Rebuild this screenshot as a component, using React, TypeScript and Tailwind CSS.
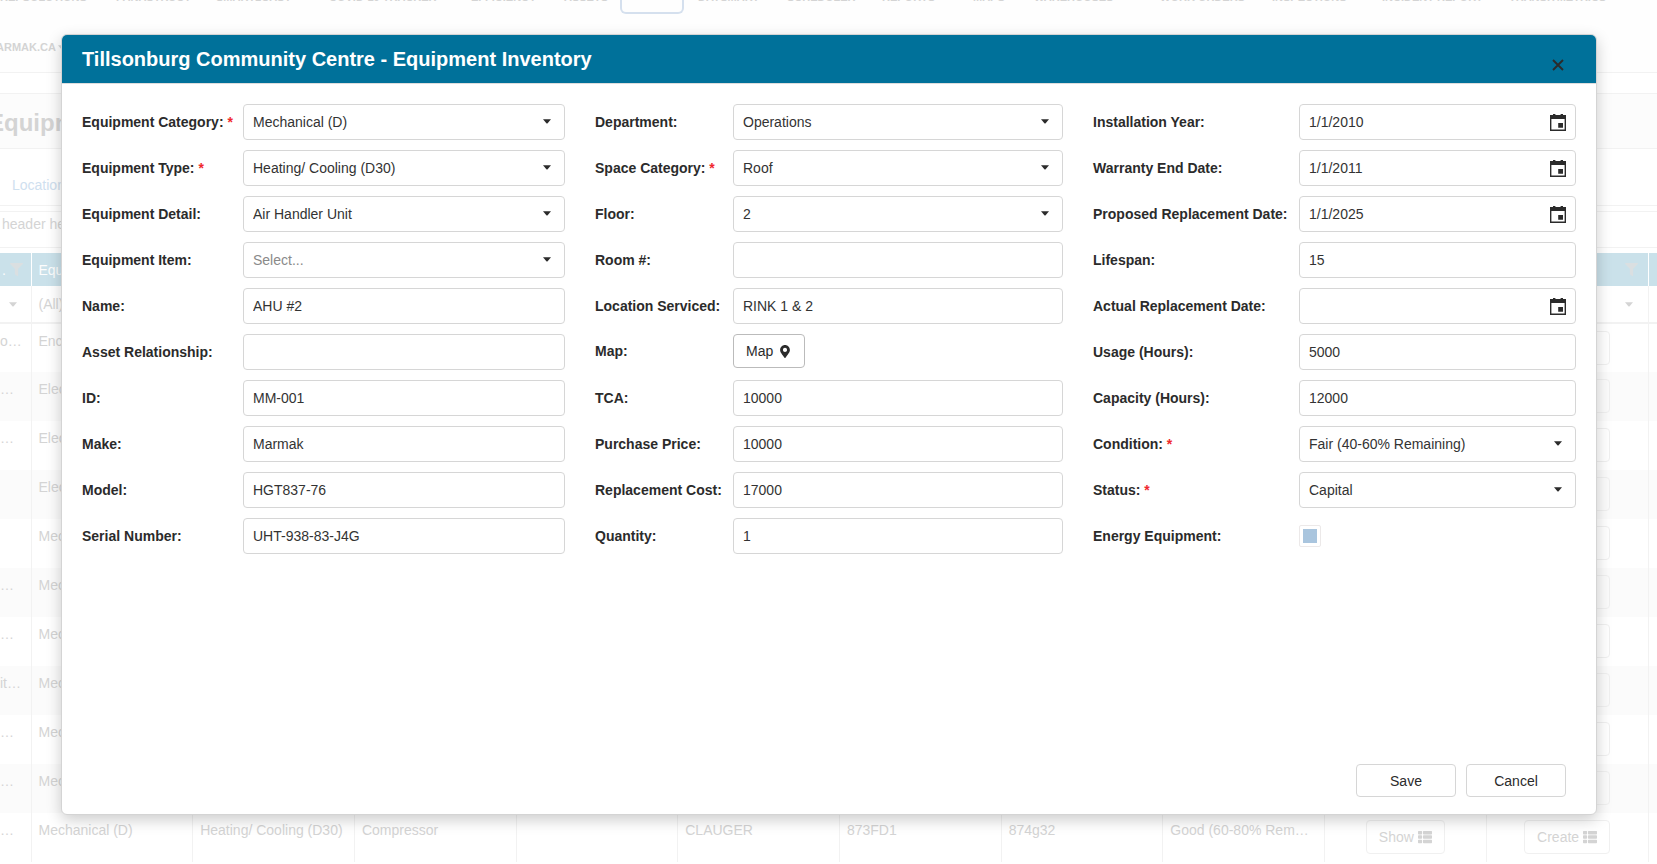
import { useId, type ReactNode } from "react";
import { FaFilter, FaThList, FaMapMarkerAlt } from "react-icons/fa";

function Caret({ className = "" }: { className?: string }) {
  return (
    <svg viewBox="0 0 8 5" className={`h-[5px] w-2 ${className}`} aria-hidden="true">
      <path d="M0 0.3h8L4.6 4.3q-.6.6-1.2 0z" fill="currentColor" />
    </svg>
  );
}

function CalendarIcon() {
  return (
    <svg viewBox="0 0 16 17" className="h-[17px] w-4" aria-hidden="true">
      <path
        fill="currentColor"
        fillRule="evenodd"
        d="M3 0h2.4v1h5.2V0H13v1h3v16H0V1h3zM1.4 5v10.4h13.2V5zM8.2 9h4.8v4.8H8.2z"
      />
    </svg>
  );
}

const box = "h-9 w-full rounded border border-[#d6d6d6] bg-white px-[9px] text-sm";

function Row({
  label,
  labelWidth,
  required,
  id,
  height = "h-9",
  children,
}: {
  label: string;
  labelWidth: string;
  required?: boolean;
  id: string;
  height?: string;
  children: ReactNode;
}) {
  return (
    <div className={`flex items-center ${height}`}>
      <label htmlFor={id} className={`shrink-0 text-sm font-bold whitespace-nowrap ${labelWidth}`}>
        {label}
        {required && <span className="text-[#f0282d]"> *</span>}
      </label>
      <div className="relative min-w-0 flex-1">{children}</div>
    </div>
  );
}

type FieldProps = {
  label: string;
  labelWidth: string;
  value?: string;
  required?: boolean;
  kind?: "text" | "select" | "date";
};

function Field({ label, labelWidth, value = "", required, kind = "text" }: FieldProps) {
  const id = useId();
  return (
    <Row label={label} labelWidth={labelWidth} required={required} id={id}>
      {kind === "select" ? (
        <>
          <select
            id={id}
            defaultValue={value}
            className={`${box} appearance-none ${value ? "text-[#333]" : "text-[#8a8a8a]"}`}
          >
            <option value={value}>{value || "Select..."}</option>
          </select>
          <Caret className="pointer-events-none absolute top-[15px] right-[14px]" />
        </>
      ) : (
        <input id={id} type="text" defaultValue={value} className={`${box} text-[#333]`} />
      )}
      {kind === "date" && (
        <button
          type="button"
          aria-label={`Choose ${label}`}
          className="absolute inset-y-0 right-0 flex w-9 items-center justify-center"
        >
          <CalendarIcon />
        </button>
      )}
    </Row>
  );
}

type Spec = Omit<FieldProps, "labelWidth">;

const first: Spec[] = [
  { label: "Equipment Category:", value: "Mechanical (D)", required: true, kind: "select" },
  { label: "Equipment Type:", value: "Heating/ Cooling (D30)", required: true, kind: "select" },
  { label: "Equipment Detail:", value: "Air Handler Unit", kind: "select" },
  { label: "Equipment Item:", kind: "select" },
  { label: "Name:", value: "AHU #2" },
  { label: "Asset Relationship:" },
  { label: "ID:", value: "MM-001" },
  { label: "Make:", value: "Marmak" },
  { label: "Model:", value: "HGT837-76" },
  { label: "Serial Number:", value: "UHT-938-83-J4G" },
];

const secondTop: Spec[] = [
  { label: "Department:", value: "Operations", kind: "select" },
  { label: "Space Category:", value: "Roof", required: true, kind: "select" },
  { label: "Floor:", value: "2", kind: "select" },
  { label: "Room #:" },
  { label: "Location Serviced:", value: "RINK 1 & 2" },
];

const secondBottom: Spec[] = [
  { label: "TCA:", value: "10000" },
  { label: "Purchase Price:", value: "10000" },
  { label: "Replacement Cost:", value: "17000" },
  { label: "Quantity:", value: "1" },
];

const third: Spec[] = [
  { label: "Installation Year:", value: "1/1/2010", kind: "date" },
  { label: "Warranty End Date:", value: "1/1/2011", kind: "date" },
  { label: "Proposed Replacement Date:", value: "1/1/2025", kind: "date" },
  { label: "Lifespan:", value: "15" },
  { label: "Actual Replacement Date:", kind: "date" },
  { label: "Usage (Hours):", value: "5000" },
  { label: "Capacity (Hours):", value: "12000" },
  { label: "Condition:", value: "Fair (40-60% Remaining)", required: true, kind: "select" },
  { label: "Status:", value: "Capital", required: true, kind: "select" },
];

function Dialog() {
  return (
    <div
      role="dialog"
      aria-labelledby="dialog-title"
      className="absolute top-[34px] right-[60px] bottom-[49px] left-[61px] flex flex-col overflow-hidden rounded-md border border-[#d4d4d4] bg-white shadow-[0_5px_15px_rgba(0,0,0,0.2)]"
    >
      <header className="flex h-[49px] shrink-0 justify-between border-b border-[#ddd] bg-[#00719a] px-5">
        <h1 id="dialog-title" className="text-xl leading-[48px] font-bold text-white">
          Tillsonburg Community Centre - Equipment Inventory
        </h1>
        <button type="button" aria-label="Close" className="flex h-9 w-9 items-center justify-center self-end">
          <svg viewBox="0 0 12 12" className="h-3 w-3" aria-hidden="true">
            <path d="M1 1l10 10M11 1L1 11" stroke="currentColor" strokeWidth="1.9" />
          </svg>
        </button>
      </header>

      <form className="flex flex-1 flex-col">
        <div className="grid grid-cols-3 px-5 pt-5">
          <div className="flex flex-col gap-2.5 pr-[15px]">
            {first.map((f) => (
              <Field key={f.label} labelWidth="w-[161px]" {...f} />
            ))}
          </div>
          <div className="flex flex-col gap-2.5 px-[15px]">
            {secondTop.map((f) => (
              <Field key={f.label} labelWidth="w-[138px]" {...f} />
            ))}
            <Row label="Map:" labelWidth="w-[138px]" id="map-button" height="mb-0.5 h-[34px]">
              <button
                id="map-button"
                type="button"
                className="flex h-[34px] items-center gap-[7px] rounded border border-[#bbb] pr-3.5 pl-3 text-sm"
              >
                Map
                <FaMapMarkerAlt className="h-[13px] w-2.5" />
              </button>
            </Row>
            {secondBottom.map((f) => (
              <Field key={f.label} labelWidth="w-[138px]" {...f} />
            ))}
          </div>
          <div className="flex flex-col gap-2.5 pl-[15px]">
            {third.map((f) => (
              <Field key={f.label} labelWidth="w-[206px]" {...f} />
            ))}
            <Row label="Energy Equipment:" labelWidth="w-[206px]" id="energy">
              <input
                id="energy"
                type="checkbox"
                className="block h-[22px] w-[22px] appearance-none rounded-xs border border-[#ece9e9] bg-[#a9c5de] bg-clip-content p-[3px]"
              />
            </Row>
          </div>
        </div>
        <div className="mt-auto flex justify-end gap-2.5 px-[30px] pb-[17px]">
          <button type="button" className="h-[33px] w-[100px] rounded border border-[#d6d6d6] text-sm">
            Save
          </button>
          <button type="button" className="h-[33px] w-[100px] rounded border border-[#d6d6d6] text-sm">
            Cancel
          </button>
        </div>
      </form>
    </div>
  );
}

const nav = [
  { text: "REPSOLUTIONS", gap: "w-[116px]" },
  { text: "PANASTRUCT", gap: "w-[100px]" },
  { text: "SMART1CAST", gap: "w-[113px]" },
  { text: "COVID-19 TRACKER", gap: "w-[142px]" },
  { text: "EFFICIENCY", gap: "w-[93px]" },
  { text: "ASSETS", gap: "w-[56px]" },
  { text: "", gap: "w-[78px]" },
  { text: "DAYSMART", gap: "w-[89px]" },
  { text: "SCHEDULER", gap: "w-[95px]" },
  { text: "REPORTS", gap: "w-[91px]" },
  { text: "MAPS", gap: "w-[61px]" },
  { text: "WAREHOUSES", gap: "w-[126px]" },
  { text: "WORK ORDERS", gap: "w-[112px]" },
  { text: "INSPECTIONS", gap: "w-[110px]" },
  { text: "INCIDENT REPORT", gap: "w-[127px]" },
  { text: "TRANSITMETRICS", gap: "w-[110px]" },
];

const types: [string, string][] = [
  ["o…", "Enclosure"],
  ["…", "Electrical"],
  ["…", "Electrical"],
  ["", "Electrical"],
  ["", "Mechanical (D)"],
  ["…", "Mechanical (D)"],
  ["…", "Mechanical (D)"],
  ["it…", "Mechanical (D)"],
  ["…", "Mechanical (D)"],
  ["…", "Mechanical (D)"],
  ["…", "Mechanical (D)"],
];

const rest = ["Heating/ Cooling (D30)", "Compressor", "", "CLAUGER", "873FD1", "874g32", "Good (60-80% Remaining)"];

function RowButton({ children }: { children: string }) {
  return (
    <button type="button" className="inline-flex h-[34px] items-center gap-1 rounded border border-[#f0f0f0] px-3">
      {children}
      <FaThList className="h-3.5 w-3.5" />
    </button>
  );
}

function Background() {
  return (
    <div className="h-full text-sm text-[#d4d4d4]">
      <nav className="flex h-[73px] flex-col border-b border-[#f2f2f2] bg-[#fefefe]">
        <div className="flex h-4 shrink-0 overflow-hidden">
          {nav.map(({ text, gap }) =>
            text ? (
              <a key={text} href="#" className={`-mt-[10px] shrink-0 text-[11px] leading-[14px] font-bold whitespace-nowrap ${gap}`}>
                {text}
              </a>
            ) : (
              <a key="current" href="#" aria-label="Equipment" className={`h-3.5 shrink-0 ${gap}`}>
                <span className="block h-3.5 w-16 rounded-b-md border-2 border-t-0 border-[#d5e0ee]" />
              </a>
            ),
          )}
        </div>
        <div className="mt-[23px] -ml-1 flex items-center gap-0.5 text-[11px] leading-4 font-bold">
          ARMAK.CA
          <Caret />
        </div>
      </nav>
      <div className="mt-5 flex h-[56px] items-center border-y border-[#f2f2f2] bg-[#fcfcfc] pt-1 text-2xl font-bold">
        <span className="-ml-3">Equipment</span>
      </div>
      <div className="h-[57px] border-b border-[#f2f2f2] px-3 pt-[26px]">
        <a href="#" className="text-[#cfe0ef]">
          Location
        </a>
      </div>
      <div className="mt-[5px] h-[37px] border-y border-[#f2f2f2] pl-0.5 leading-6">header here to group by that column</div>
      <table className="mt-[5px] w-full table-fixed border-collapse">
        <colgroup>
          <col className="w-[31px]" />
          {Array.from({ length: 10 }, (_, i) => (
            <col key={i} />
          ))}
          <col className="w-[9px]" />
        </colgroup>
        <thead>
          <tr className="h-[33px] bg-[#cae1ea] text-left text-[#fdfdfd]">
            <th className="border-r border-white font-normal">
              <span className="flex items-center gap-1 pl-0.5">
                .
                <FaFilter className="h-[13px] w-[13px] shrink-0 text-[#dadfe1]" />
              </span>
            </th>
            {Array.from({ length: 10 }, (_, i) => (
              <th key={i} className="border-r border-white pr-2.5 pl-[7px] font-normal">
                <span className="flex items-center">
                  {i === 0 ? "Equipment" : ""}
                  <FaFilter className="ml-auto h-[13px] w-[13px] text-[#dadfe1]" />
                </span>
              </th>
            ))}
            <th />
          </tr>
        </thead>
        <tbody>
          <tr className="h-[37px] border-b-2 border-[#f2f2f2]">
            <td className="border-r border-[#f2f2f2]">
              <Caret className="ml-[9px]" />
            </td>
            {Array.from({ length: 10 }, (_, i) => (
              <td key={i} className="border-r border-[#f2f2f2] px-[7px]">
                <span className="flex items-center justify-between pr-2">
                  {i === 0 ? "(All)" : <span />}
                  <Caret />
                </span>
              </td>
            ))}
            <td />
          </tr>
          {types.map(([head, type], r) => (
            <tr key={r} className="h-[49px] align-top odd:bg-[#fbfbfb] even:bg-white">
              <td className="overflow-hidden border-r border-[#f2f2f2] pt-[7px]">{head}</td>
              {[type, ...rest].map((text, i) => (
                <td key={i} className="truncate border-r border-[#f2f2f2] pt-[7px] pr-2 pl-[7px]">
                  {text}
                </td>
              ))}
              <td className="border-r border-[#f2f2f2] pt-[7px] text-center">
                <RowButton>Show</RowButton>
              </td>
              <td className="border-r border-[#f2f2f2] pt-[7px] text-center">
                <RowButton>Create</RowButton>
              </td>
              <td />
            </tr>
          ))}
        </tbody>
      </table>
    </div>
  );
}

export default function App() {
  return (
    <main className="relative h-screen overflow-hidden bg-white font-['Liberation_Sans',Arial,sans-serif] text-[#2b2b2b]">
      <Background />
      <Dialog />
    </main>
  );
}
